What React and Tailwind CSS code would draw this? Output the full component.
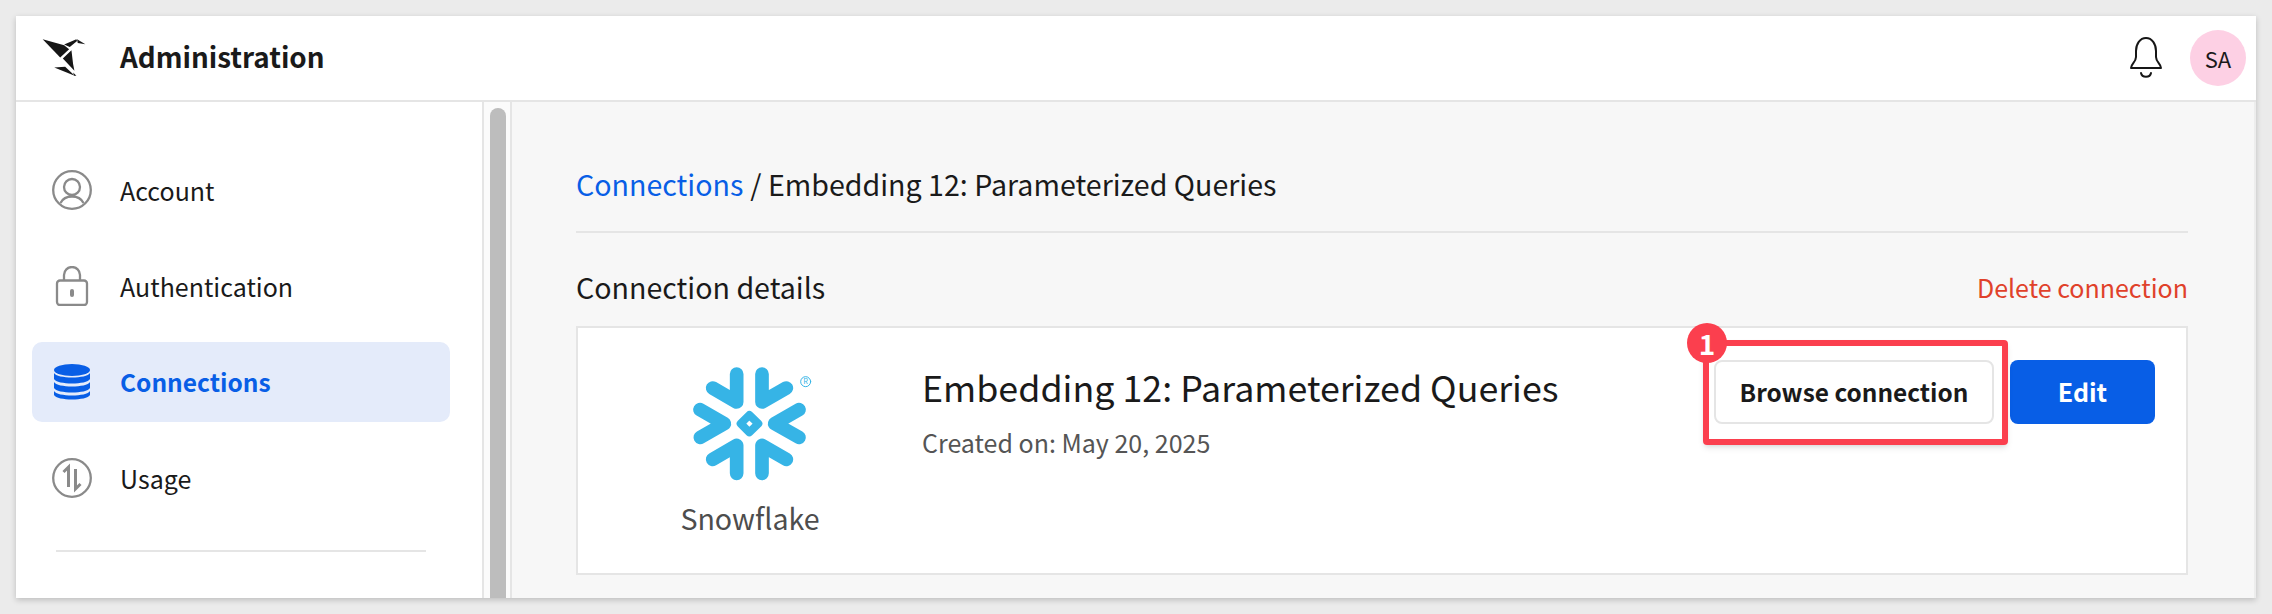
import React from 'react';

const FONT = "font-['Noto_Sans_CJK_JP','Source_Sans_3','Noto_Sans',sans-serif]";

function BirdLogo() {
    return (
        <svg viewBox="60 45 145 130" className="w-[48px] h-[43px] mb-[2px]" fill="#161616">
            <polygon points="68,55 133,73 148,85 121,110" />
            <polygon points="133,71 170,55 172,60 150,78" />
            <polygon points="172,55 197,70 174,66" />
            <polygon points="155,88 160,130 164,150 129,113" />
            <polygon points="103,140 136,138 165,165" />
            <polygon points="160,155 170,165 163,165" />
        </svg>
    );
}

function AccountIcon() {
    return (
        <svg viewBox="0 0 40 40" className="w-10 h-10" fill="none" stroke="#8a8a8a" strokeWidth="2.3">
            <circle cx="20" cy="20" r="18.8" />
            <circle cx="20" cy="17" r="8" />
            <path d="M8.5 33 C11 28 15 26.5 20 26.5 C25 26.5 29 28 31.5 33" />
        </svg>
    );
}

function LockIcon() {
    return (
        <svg viewBox="0 0 40 40" className="w-10 h-10" fill="none" stroke="#8a8a8a" strokeWidth="2.3">
            <rect x="5" y="14.5" width="30" height="24.5" rx="3" />
            <path d="M12 14.5 V9 a8 8 0 0 1 16 0 V14.5" />
            <rect x="18" y="23" width="4" height="8" rx="2" fill="#8a8a8a" stroke="none" />
        </svg>
    );
}

function DatabaseIcon() {
    return (
        <svg viewBox="0 0 40 40" className="w-10 h-10" fill="#085ee6">
            <ellipse cx="20" cy="8" rx="18" ry="6" />
            <path d="M2 11 C5 17 35 17 38 11 V17 C35 23 5 23 2 17 Z" />
            <path d="M2 20 C5 26 35 26 38 20 V26 C35 32 5 32 2 26 Z" />
            <path d="M2 29 C5 35 35 35 38 29 V33 C35 39 5 39 2 33 Z" />
        </svg>
    );
}

function UsageIcon() {
    return (
        <svg viewBox="0 0 40 40" className="w-10 h-10" fill="none" stroke="#8a8a8a" strokeWidth="2.3">
            <circle cx="20" cy="20" r="18.8" />
            <path d="M11.5 14 L16.5 9 V29" strokeWidth="3" />
            <path d="M23.5 11 V31 L28.5 26" strokeWidth="3" />
        </svg>
    );
}

function BellIcon() {
    return (
        <svg viewBox="0 0 34 44" className="w-[34px] h-[44px]" fill="none" stroke="#161616" strokeWidth="2" strokeLinejoin="round" strokeLinecap="round">
            <path d="M7 21 V15 C7 8 11 2 17 2 C23 2 27 8 27 15 V21 C27 26 32 28 32 32 H2 C2 28 7 26 7 21 Z" />
            <path d="M12 37 C13 42 21 42 22 37" />
        </svg>
    );
}

function SnowflakeLogo() {
    return (
        <svg viewBox="270 130 390 360" className="w-[130px] h-[120px] ml-[7px]" fill="none" stroke="#36b4e6" strokeWidth="41" strokeLinecap="round" strokeLinejoin="round">
            <path d="M413 160 V244 L341 202" />
            <path d="M489 160 V244 L562 202" />
            <path d="M303 267 L376 309 L304 350" />
            <path d="M600 267 L527 309 L600 350" />
            <path d="M341 416 L413 374 V458" />
            <path d="M562 416 L489 374 V458" />
            <path d="M451 283 L478 309 L451 335 L425 309 Z" strokeWidth="24" />
            <circle cx="620" cy="183" r="15" strokeWidth="3" />
            <text x="620" y="191" textAnchor="middle" fontSize="22" fill="#36b4e6" stroke="none">R</text>
        </svg>
    );
}

function NavItem({ icon, label, active }) {
    return (
        <div className={`flex items-center h-20 pl-[20px] rounded-[10px] ${active ? 'bg-[#e4ebfa]' : ''}`}>
            <span className="w-10 h-10 shrink-0">{icon}</span>
            <span className={`ml-[28px] leading-none ${active ? 'text-[24.5px] font-semibold text-[#085ee6]' : 'text-[25px] text-[#1a1a1a]'}`}>
                {label}
            </span>
        </div>
    );
}

export default function App() {
    return (
        <div className={`w-full h-[614px] bg-[#ebebeb] p-4 ${FONT}`}>
            <div className="flex flex-col h-[582px] bg-white shadow-[0_2px_6px_rgba(0,0,0,0.2)] overflow-hidden">

                {/* HEADER */}
                <div className="flex items-center justify-between h-[86px] shrink-0 border-b-2 border-[#e5e5e5] pl-6 pr-[10px]">
                    <div className="flex items-center">
                        <BirdLogo />
                        <span className="ml-[32px] mb-[2px] text-[27.8px] font-semibold text-[#1a1a1a]">Administration</span>
                    </div>
                    <div className="flex items-center gap-[27px]">
                        <BellIcon />
                        <div className="flex items-center justify-center w-14 h-14 rounded-full bg-[#fdd0e4] text-[22px] text-[#1a1a1a]">SA</div>
                    </div>
                </div>

                <div className="flex flex-1 min-h-0">
                    {/* SIDEBAR */}
                    <div className="w-[468px] shrink-0 border-r-2 border-[#e5e5e5] pt-[48px] px-4">
                        <div className="flex flex-col gap-4 w-[418px]">
                            <NavItem icon={<AccountIcon />} label="Account" />
                            <NavItem icon={<LockIcon />} label="Authentication" />
                            <NavItem icon={<DatabaseIcon />} label="Connections" active />
                            <NavItem icon={<UsageIcon />} label="Usage" />
                        </div>
                        <div className="mt-[32px] ml-6 w-[370px] border-t-2 border-[#e5e5e5]" />
                    </div>

                    {/* SCROLLBAR */}
                    <div className="w-[28px] shrink-0 border-r-2 border-[#e5e5e5] bg-[#fbfbfb] pt-1.5 pl-1.5">
                        <div className="w-4 h-full rounded-t-lg bg-[#bdbdbd]" />
                    </div>

                    {/* MAIN */}
                    <div className="flex-1 min-w-0 bg-[#f7f7f7] pl-[64px] pr-[66px] border-r-2 border-[#ededed]">
                        <div className="flex items-center pt-[62px] pb-[27px] border-b-2 border-[#e5e5e5] text-[28.6px] leading-10">
                            <span className="text-[#085ee6]">Connections</span>
                            <span className="ml-[7px] text-[#1a1a1a]">/ Embedding 12: Parameterized Queries</span>
                        </div>
                        <div className="flex items-center justify-between pt-[34px] pb-[19px] leading-10">
                            <span className="text-[28.6px] text-[#1a1a1a]">Connection details</span>
                            <span className="text-[25px] text-[#e0412a]">Delete connection</span>
                        </div>
                        <div className="flex h-[249px] bg-white border-2 border-[#e5e5e5]">
                            <div className="flex flex-col items-center w-[344px] pt-[36px] shrink-0">
                                <SnowflakeLogo />
                                <span className="mt-[14px] text-[28.6px] leading-10 text-[#4d4d4d]">Snowflake</span>
                            </div>
                            <div className="pt-[36px] flex-1">
                                <div className="text-[35.8px] leading-[45px] text-[#1a1a1a]">Embedding 12: Parameterized Queries</div>
                                <div className="mt-[16px] text-[25px] leading-[34px] text-[#555555]">Created on: May 20, 2025</div>
                            </div>
                            <div className="flex gap-4 pt-[32px] pr-[31px]">
                                <div className="relative">
                                    <div className="flex items-center justify-center w-[280px] h-16 rounded-lg border-2 border-[#e5e5e5] text-[24.4px] font-semibold text-[#1a1a1a]">
                                        Browse connection
                                    </div>
                                    {/* annotation */}
                                    <div className="absolute -left-[11px] -top-[20px] w-[305px] h-[105px] border-[6px] border-[#fb3f4e] rounded-sm shadow-md" />
                                    <div className="absolute -left-[27px] -top-[37px] flex items-center justify-center w-10 h-10 rounded-full bg-[#fb3f4e] text-[28px] font-bold text-white">1</div>
                                </div>
                                <div className="flex items-center justify-center w-[145px] h-16 rounded-lg bg-[#085ee6] text-[25px] font-semibold text-white">
                                    Edit
                                </div>
                            </div>
                        </div>
                    </div>
                </div>
            </div>
        </div>
    );
}
